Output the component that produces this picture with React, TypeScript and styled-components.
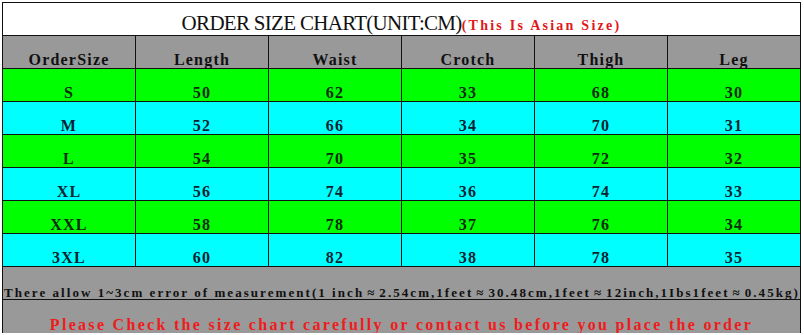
import styled, { createGlobalStyle } from 'styled-components'

const GlobalStyle = createGlobalStyle`
  html, body {
    margin: 0;
    padding: 0;
    background: #ffffff;
  }
  body {
    font-family: "Liberation Serif", "DejaVu Serif", serif;
  }
`

const GREEN = '#00ff00'
const CYAN = '#00ffff'
const GRAY = '#999999'

const Sheet = styled.div`
  display: grid;
  grid-template-columns: repeat(6, 133px);
  grid-auto-rows: 33px;
  margin: 2px 0 0 2px;
  width: max-content;
  border-top: 1px solid #111;
  border-left: 1px solid #111;
`

const Cell = styled.div<{ $bg: string; $ink?: string }>`
  box-sizing: border-box;
  display: flex;
  align-items: flex-end;
  justify-content: center;
  background: ${(p) => p.$bg};
  color: ${(p) => p.$ink || '#111'};
  border-right: 1px solid #111;
  border-bottom: 1px solid #111;
  font-size: 16px;
  line-height: 16px;
  letter-spacing: 1.2px;
  font-weight: bold;
  padding-bottom: 0;
  white-space: nowrap;
`

const Title = styled(Cell)`
  grid-column: 1 / -1;
  align-items: baseline;
  padding-top: 10px;
  font-weight: normal;
`

const TitleMain = styled.span`
  font-size: 21px;
  line-height: 21px;
  letter-spacing: -0.7px;
  color: #111;
`

const TitleNote = styled.span`
  font-size: 14px;
  line-height: 14px;
  letter-spacing: 2.25px;
  font-weight: bold;
  color: #e01818;
`

const Wide = styled(Cell)<{ $h?: number }>`
  grid-column: 1 / -1;
  height: ${(p) => p.$h || 33}px;
`

const NoteText = styled.span`
  display: block;
  width: 100%;
  font-size: 13px;
  line-height: 13px;
  letter-spacing: 2.05px;
  text-align: left;
  padding-left: 1px;
  overflow: hidden;
`

const Approx = styled.span`
  padding: 0 3px;
`

const Warning = styled.span`
  font-size: 16px;
  line-height: 17px;
  letter-spacing: 2.3px;
  color: #ee1c1c;
`

const headers = ['OrderSize', 'Length', 'Waist', 'Crotch', 'Thigh', 'Leg']

const rows: (string | number)[][] = [
  ['S', 50, 62, 33, 68, 30],
  ['M', 52, 66, 34, 70, 31],
  ['L', 54, 70, 35, 72, 32],
  ['XL', 56, 74, 36, 74, 33],
  ['XXL', 58, 78, 37, 76, 34],
  ['3XL', 60, 82, 38, 78, 35],
]

export default function App() {
  return (
    <>
      <GlobalStyle />
      <Sheet>
        <Title $bg="#ffffff">
          <TitleMain>ORDER SIZE CHART(UNIT:CM)</TitleMain>
          <TitleNote>(This Is Asian Size)</TitleNote>
        </Title>
        {headers.map((h) => (
          <Cell key={h} $bg={GRAY}>
            {h}
          </Cell>
        ))}
        {rows.map((r, i) =>
          r.map((v, j) => (
            <Cell
              key={`${i}-${j}`}
              $bg={i % 2 === 0 ? GREEN : CYAN}
              $ink={i % 2 === 0 ? '#0c2a0c' : '#0a2230'}
            >
              {v}
            </Cell>
          ))
        )}
        <Wide $bg={GRAY}>
          <NoteText>
            There allow 1~3cm error of measurement(1 inch<Approx>≈</Approx>2.54cm,1feet
            <Approx>≈</Approx>30.48cm,1feet<Approx>≈</Approx>12inch,1Ibs1feet
            <Approx>≈</Approx>0.45kg)
          </NoteText>
        </Wide>
        <Wide $bg={GRAY} $h={34}>
          <Warning>
            Please Check the size chart carefully or contact us before you place the order
          </Warning>
        </Wide>
      </Sheet>
    </>
  )
}
